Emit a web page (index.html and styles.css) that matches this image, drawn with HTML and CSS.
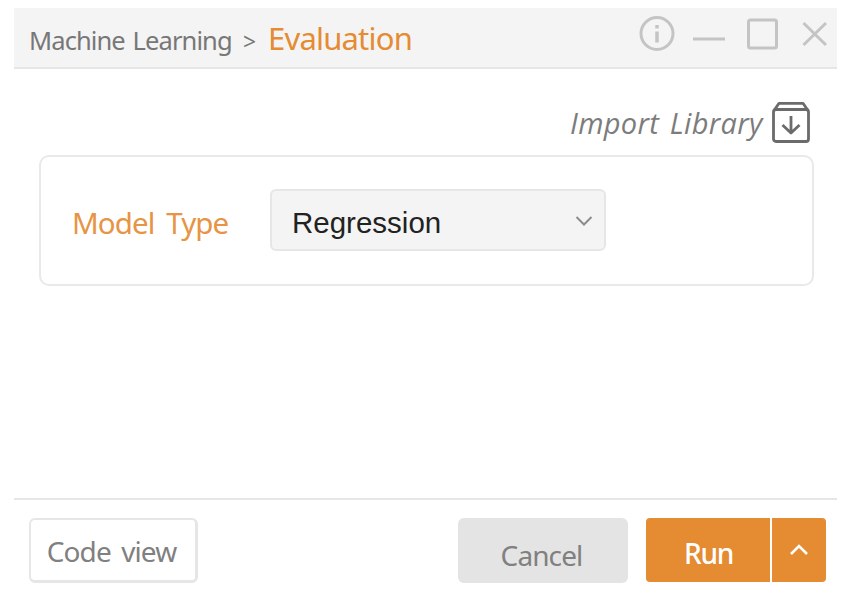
FILE: index.html
```
<!DOCTYPE html>
<html lang="en">
<head>
<meta charset="utf-8">
<title>Evaluation</title>
<link rel="stylesheet" href="styles.css">
</head>
<body>
<main class="window">
  <header class="titlebar">
    <span class="crumb">Machine Learning</span>
    <span class="sep">&gt;</span>
    <h1 class="title">Evaluation</h1>
    <svg class="controls" width="194" height="58" viewBox="0 0 194 58" fill="none" stroke="#c4c4c4" stroke-width="3">
      <circle cx="20" cy="25.500" r="16"/>
      <path d="M20 17v3.500M20 23.500v11" stroke-width="3.500"/>
      <path d="M56 31h32"/>
      <rect x="111.500" y="12" width="28" height="28" rx="2"/>
      <path d="M166.500 15l22.500 22M189 15l-22.500 22"/>
    </svg>
  </header>
  <section class="content">
    <div class="import">
      <span class="import-label">Import Library</span>
      <svg width="40" height="42" viewBox="0 0 40 42" fill="none" stroke="#6b6b6b" stroke-width="2.800" stroke-linejoin="round">
        <rect x="2.500" y="8.500" width="35" height="32" rx="2.500"/>
        <path d="M3 9.500l5-7.200h24l5 7.200" />
        <path d="M20 15v17M11.500 24l8.500 8 8.500-8"/>
      </svg>
    </div>
    <div class="panel">
      <span class="field-label">Model Type</span>
      <div class="select">
        <span class="value">Regression</span>
        <svg width="18" height="12" viewBox="0 0 18 12" fill="none" stroke="#8c8c8c" stroke-width="2"><path d="M1.500 2l7.500 7.500L16.500 2"/></svg>
      </div>
    </div>
  </section>
  <footer class="footer">
    <button class="btn code"><span>Code view</span></button>
    <button class="btn cancel"><span>Cancel</span></button>
    <button class="btn run"><span>Run</span></button>
    <button class="btn more" aria-label="More"><svg width="20" height="14" viewBox="0 0 20 14" fill="none" stroke="#fff" stroke-width="2.600"><path d="M2 11l8-8 8 8"/></svg></button>
  </footer>
</main>
</body>
</html>
```
FILE: styles.css
```
* { box-sizing: border-box; }
body {
  margin: 0;
  background: #fff;
  font-family: "Noto Sans", "Open Sans", sans-serif;
}
.window {
  width: 823px;
  height: 598px;
  margin: 8px 0 0 14px;
  display: flex;
  flex-direction: column;
}
.titlebar {
  height: 61px;
  flex: none;
  display: flex;
  align-items: baseline;
  padding: 0 6px 0 15px;
  background: #f4f4f4;
  border-bottom: 2px solid #e6e6e6;
  line-height: 61px;
  white-space: nowrap;
}
.crumb { width: 214px; font-size: 25.5px; letter-spacing: -0.9px; word-spacing: 2px; color: #777; }
.sep { width: 25px; font-size: 23px; color: #777; }
.title { margin: 0; font-size: 31px; font-weight: 400; letter-spacing: -0.8px; color: #e58b32; }
.controls { margin-left: auto; align-self: flex-start; }
.content { flex: 1; padding: 32px 23px 0 25px; }
.import {
  height: 42px;
  display: flex;
  align-items: center;
  justify-content: flex-end;
  gap: 8px;
  padding-right: 3px;
}
.import-label { width: 193px; padding-top: 2px; font-family: "Open Sans", sans-serif; font-size: 29px; line-height: 42px; font-style: italic; letter-spacing: 0.3px; word-spacing: 3px; white-space: nowrap; color: #7c7c7c; }
.panel {
  height: 131px;
  margin-top: 12px;
  display: flex;
  align-items: center;
  padding: 0 0 1px 31px;
  border: 2px solid #e9e9e9;
  border-radius: 10px;
}
.field-label { width: 198px; padding-top: 4px; font-size: 29.5px; letter-spacing: -0.9px; word-spacing: 5px; color: #e79445; white-space: nowrap; }
.select {
  width: 336px;
  height: 62px;
  display: flex;
  align-items: center;
  justify-content: space-between;
  padding: 2px 11px 0 20px;
  background: #f4f4f4;
  border: 2px solid #e6e6e6;
  border-radius: 6px;
}
.value { padding-top: 3px; font: 29.5px "Liberation Sans", sans-serif; color: #222; }
.footer {
  height: 108px;
  flex: none;
  display: flex;
  align-items: flex-start;
  padding: 18px 11px 0 15px;
  border-top: 2px solid #e6e6e6;
}
.btn {
  height: 64px;
  padding: 0;
  border: 0;
  font: 28px "Noto Sans", sans-serif;
  display: flex;
  align-items: center;
  justify-content: center;
}
.code { width: 169px; height: 65px; padding: 2px 3px 0 0; background: #fff; border: 2px solid #e6e6e6; border-right-width: 3px; border-bottom-width: 3px; border-radius: 6px; color: #808080; letter-spacing: -0.9px; word-spacing: 4px; }
.cancel { width: 170px; height: 65px; margin-left: auto; padding: 8px 3px 0 0; background: #e4e4e4; border-radius: 6px; color: #808080; letter-spacing: -0.9px; }
.run { width: 124px; margin-left: 18px; padding: 6px 0 0 1px; background: #e58b32; border-radius: 4px 0 0 4px; color: #fff; font-weight: 500; letter-spacing: -1.3px; }
.more { width: 54px; margin-left: 2px; background: #e58b32; border-radius: 0 4px 4px 0; }
```
